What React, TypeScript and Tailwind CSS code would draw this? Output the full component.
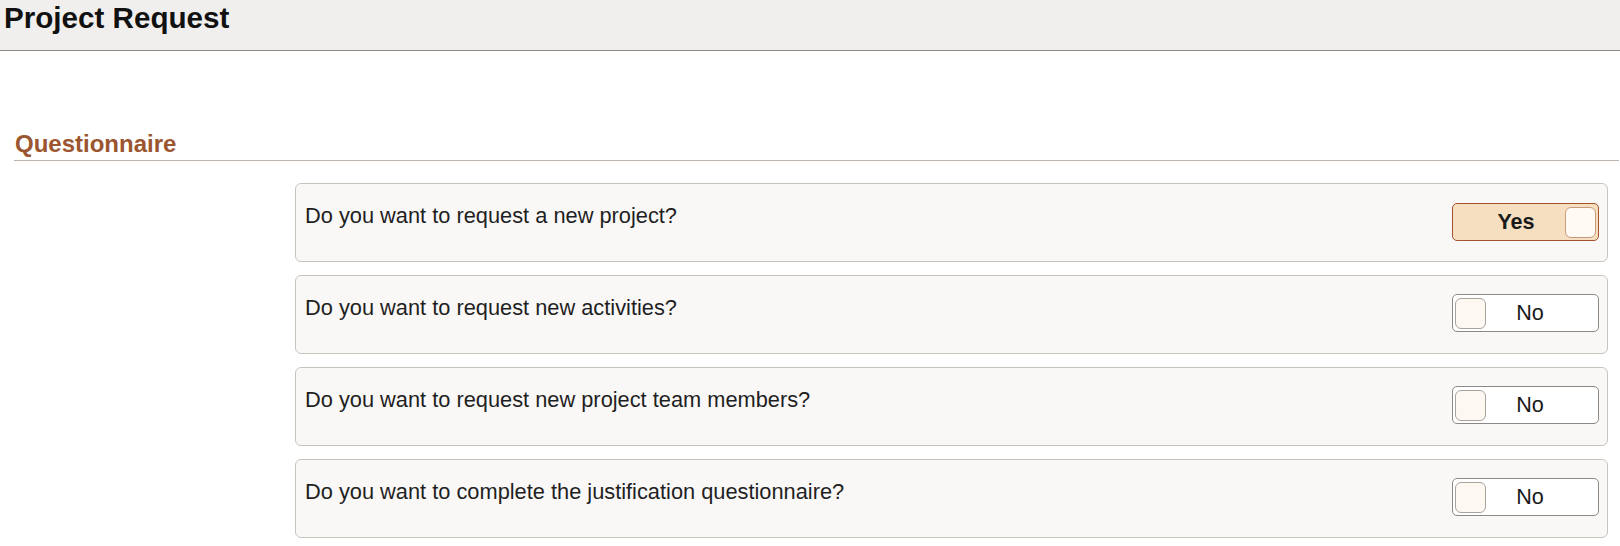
import React from "react";

type Question = { id: number; text: string; answer: boolean };

const questions: Question[] = [
  { id: 1, text: "Do you want to request a new project?", answer: true },
  { id: 2, text: "Do you want to request new activities?", answer: false },
  { id: 3, text: "Do you want to request new project team members?", answer: false },
  { id: 4, text: "Do you want to complete the justification questionnaire?", answer: false },
];

function YesNo({ on }: { on: boolean }) {
  if (on) {
    return (
      <div className="mt-[19px] flex h-[38px] w-[147px] shrink-0 items-center rounded-[5px] border border-[#a4532c] bg-[#f6dfc1] pr-[2px]">
        <span className="flex-1 pl-[14px] text-center text-[21.6px] font-bold leading-none text-[#1a1a1a]">Yes</span>
        <span className="h-[31px] w-[31px] rounded-[6px] border border-[#c79c7c] bg-[#fffaf4]" />
      </div>
    );
  }
  return (
    <div className="mt-[18px] flex h-[38px] w-[147px] shrink-0 items-center rounded-[5px] border border-[#8e8984] bg-white pl-[2px]">
      <span className="h-[31px] w-[31px] rounded-[6px] border border-[#aaa29b] bg-[#fdf8f2]" />
      <span className="flex-1 pr-[24px] text-center text-[21.6px] leading-none text-[#1a1a1a]">No</span>
    </div>
  );
}

export default function App() {
  return (
    <main className="min-h-screen bg-white font-['Liberation_Sans',Arial,sans-serif]">
      <header className="h-[51px] border-b border-[#8f8a86] bg-[#f0efee] pl-[4px] pt-px">
        <h1 className="text-[29.6px] font-bold leading-[34px] text-[#111]">Project Request</h1>
      </header>

      <section className="ml-[14px] mr-[1px] mt-[79px] border-b border-[#bdb5ad] pb-[2px]">
        <h2 className="pl-px text-[24px] font-bold leading-[28px] text-[#9b5630]">Questionnaire</h2>
      </section>

      <div className="ml-[295px] mr-[12px] mt-[22px] flex flex-col gap-[13px]">
        {questions.map((q) => (
          <div
            key={q.id}
            className="flex h-[79px] items-start justify-between rounded-[6px] border border-[#c9c3bd] bg-[#f9f8f7] pl-[9px] pr-[8px]"
          >
            <p className="pt-[19px] text-[21.8px] leading-[25px] text-[#1f1f1f]">{q.text}</p>
            <YesNo on={q.answer} />
          </div>
        ))}
      </div>
    </main>
  );
}
